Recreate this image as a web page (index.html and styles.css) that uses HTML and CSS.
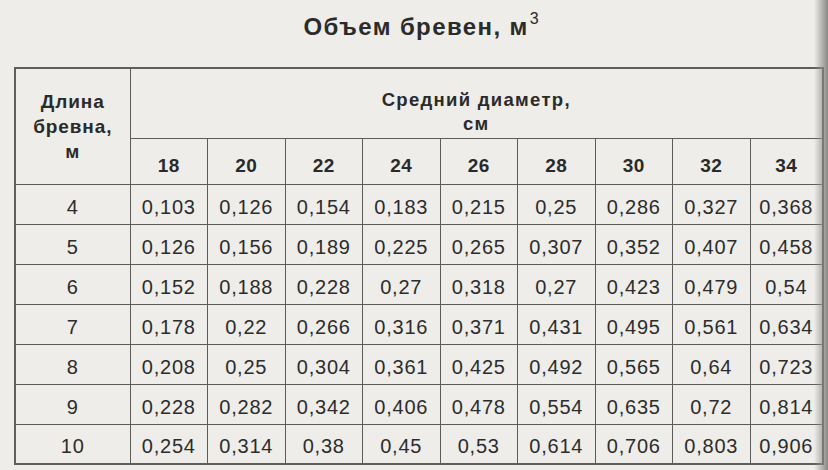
FILE: index.html
```html
<!DOCTYPE html>
<html lang="ru">
<head>
<meta charset="utf-8">
<title>Объем бревен</title>
<link rel="stylesheet" href="styles.css">
</head>
<body>
<div class="page">
  <h1 class="title">Объем бревен, м<sup class="pow">3</sup></h1>
  <table class="grid">
    <colgroup>
      <col class="c-len">
      <col class="c-d"><col class="c-d"><col class="c-d"><col class="c-d"><col class="c-d">
      <col class="c-d"><col class="c-d"><col class="c-d"><col class="c-last">
    </colgroup>
    <thead>
      <tr class="h1">
        <th rowspan="2" class="len-head">Длина<br>бревна,<br>м</th>
        <th colspan="9" class="diam-head">Средний диаметр,<br>см</th>
      </tr>
      <tr class="h2">
        <th>18</th><th>20</th><th>22</th><th>24</th><th>26</th><th>28</th><th>30</th><th>32</th><th>34</th>
      </tr>
    </thead>
    <tbody>
      <tr><td>4</td><td>0,103</td><td>0,126</td><td>0,154</td><td>0,183</td><td>0,215</td><td>0,25</td><td>0,286</td><td>0,327</td><td>0,368</td></tr>
      <tr><td>5</td><td>0,126</td><td>0,156</td><td>0,189</td><td>0,225</td><td>0,265</td><td>0,307</td><td>0,352</td><td>0,407</td><td>0,458</td></tr>
      <tr><td>6</td><td>0,152</td><td>0,188</td><td>0,228</td><td>0,27</td><td>0,318</td><td>0,27</td><td>0,423</td><td>0,479</td><td>0,54</td></tr>
      <tr><td>7</td><td>0,178</td><td>0,22</td><td>0,266</td><td>0,316</td><td>0,371</td><td>0,431</td><td>0,495</td><td>0,561</td><td>0,634</td></tr>
      <tr><td>8</td><td>0,208</td><td>0,25</td><td>0,304</td><td>0,361</td><td>0,425</td><td>0,492</td><td>0,565</td><td>0,64</td><td>0,723</td></tr>
      <tr><td>9</td><td>0,228</td><td>0,282</td><td>0,342</td><td>0,406</td><td>0,478</td><td>0,554</td><td>0,635</td><td>0,72</td><td>0,814</td></tr>
      <tr><td>10</td><td>0,254</td><td>0,314</td><td>0,38</td><td>0,45</td><td>0,53</td><td>0,614</td><td>0,706</td><td>0,803</td><td>0,906</td></tr>
    </tbody>
  </table>
  <div class="shadow"></div>
</div>
</body>
</html>
```

FILE: styles.css
```css
html, body {
  margin: 0;
  padding: 0;
  width: 828px;
  height: 470px;
  overflow: hidden;
  background: #eeede9;
}

.page {
  position: relative;
  width: 828px;
  height: 470px;
  font-family: "Liberation Sans", Arial, sans-serif;
  color: #2a2a2a;
}

.title {
  margin: 0;
  height: 67px;
  box-sizing: border-box;
  padding: 12px 0 0 14px;
  text-align: center;
  font-size: 24px;
  line-height: 30px;
  font-weight: 700;
  letter-spacing: 1.4px;
  color: #2b2b2b;
}

.pow {
  font-size: 16px;
  font-weight: 400;
  line-height: 0;
  vertical-align: 11px;
  letter-spacing: 0;
  margin-left: 1px;
}

.grid {
  margin-left: 14px;
  width: 808px;
  border-collapse: collapse;
  table-layout: fixed;
  border: 2px solid #5e5e5c;
}

.c-len { width: 115px; }
.c-d { width: 77.5px; }
.c-last { width: 73px; }

.grid th,
.grid td {
  border: 1px solid #5b5b59;
  padding: 0;
  text-align: center;
  vertical-align: middle;
}

.h1 { height: 70px; }
.h2 { height: 46px; }

.len-head {
  vertical-align: top;
  font-size: 19px;
  line-height: 25px;
  font-weight: 700;
  letter-spacing: 0.9px;
  padding-top: 26px;
}

.grid .diam-head {
  vertical-align: top;
  font-size: 18.5px;
  line-height: 24px;
  font-weight: 700;
  letter-spacing: 1.3px;
  padding-top: 19px;
}

.h2 th {
  vertical-align: top;
  font-size: 19px;
  line-height: 22px;
  font-weight: 700;
  letter-spacing: 0.5px;
  padding-top: 16px;
}

.grid tbody tr { height: 40px; }

.grid td {
  font-size: 20px;
  letter-spacing: 0.8px;
  color: #2c2c2c;
  padding-top: 6px;
}

.shadow {
  position: absolute;
  top: 0;
  right: 0;
  width: 14px;
  height: 470px;
  background: linear-gradient(to right, rgba(150,148,145,0) 0%, rgba(150,148,145,0.55) 50%, rgba(120,118,115,0.85) 100%);
  pointer-events: none;
}
```
